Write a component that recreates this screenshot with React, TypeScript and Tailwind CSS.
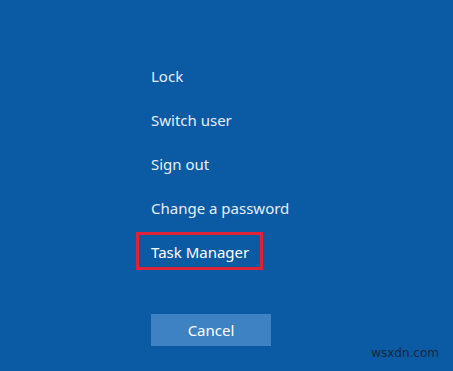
import React from "react";

const ITEMS = ["Lock", "Switch user", "Sign out", "Change a password", "Task Manager"];

export default function App() {
  return (
    <div
      className="relative h-[371px] w-[453px] overflow-hidden bg-[#0b5ba4] pl-[151px] pt-[54px]"
      style={{ fontFamily: '"Noto Sans", "Open Sans", sans-serif' }}
    >
      <ul className="flex flex-col">
        {ITEMS.map((label) => (
          <li
            key={label}
            className="relative flex h-[44px] items-center text-[15px] text-[#e6eef8]"
          >
            {label === "Task Manager" ? (
              <>
                <span className="text-white">{label}</span>
                <span className="absolute left-[-15px] top-[2px] h-[38px] w-[127px] border-[3px] border-[#dc2337]" />
              </>
            ) : (
              label
            )}
          </li>
        ))}
      </ul>
      <button className="mt-[40px] flex h-[32px] w-[120px] items-center justify-center bg-[#3f82c3] text-[15px] text-white">
        Cancel
      </button>
      <span
        className="absolute bottom-[9px] right-[14px] text-[12px] text-[#17283d]"
        style={{ fontFamily: '"DejaVu Sans", sans-serif' }}
      >
        wsxdn.com
      </span>
    </div>
  );
}
